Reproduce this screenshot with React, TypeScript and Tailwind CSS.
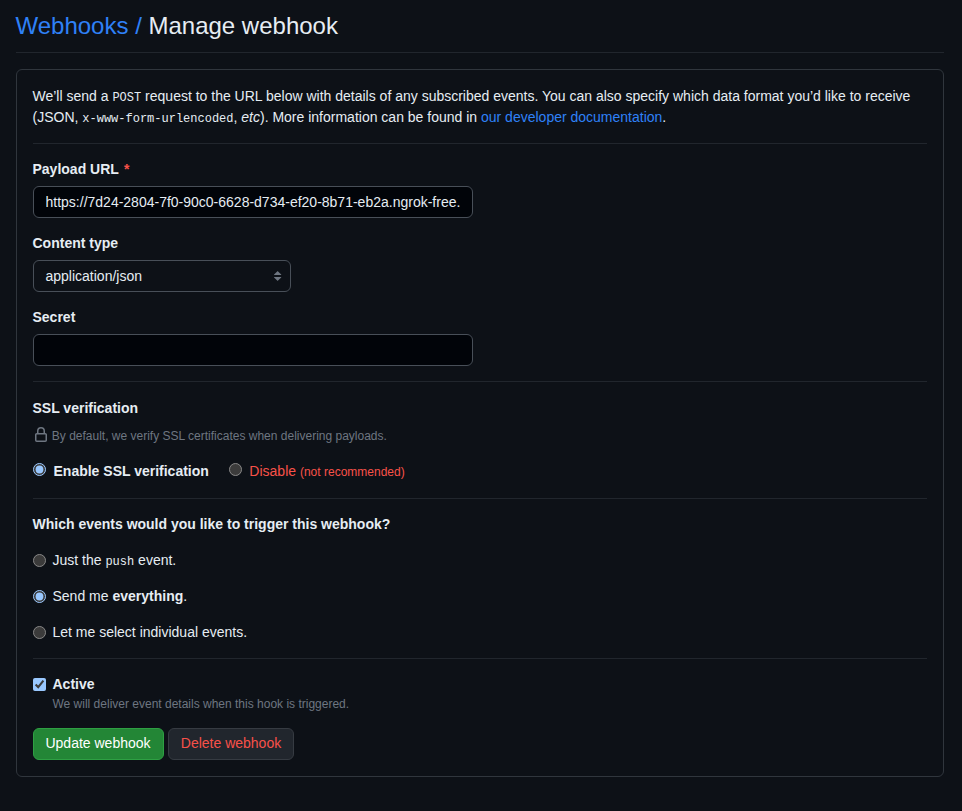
import type { ReactNode } from "react";

function Rule() {
  return <hr className="h-px border-0 bg-[#21262d]" />;
}

function Code({ children }: { children: ReactNode }) {
  return <code className="font-['Liberation_Mono',monospace] text-[12px] leading-none">{children}</code>;
}

function LockIcon() {
  return (
    <svg width="16" height="16" viewBox="0 0 16 16" fill="currentColor" className="mt-px shrink-0" aria-hidden="true">
      <path d="M4 4a4 4 0 0 1 8 0v2h.25c.966 0 1.75.784 1.75 1.75v5.5A1.75 1.75 0 0 1 12.25 15h-8.5A1.75 1.75 0 0 1 2 13.25v-5.5C2 6.784 2.784 6 3.75 6H4Zm8.25 3.5h-8.5a.25.25 0 0 0-.25.25v5.5c0 .138.112.25.25.25h8.5a.25.25 0 0 0 .25-.25v-5.5a.25.25 0 0 0-.25-.25ZM10.5 6V4a2.5 2.5 0 1 0-5 0v2Z" />
    </svg>
  );
}

function EventOption({ checked, children }: { checked?: boolean; children: ReactNode }) {
  return (
    <label className="flex h-[21px]">
      <input type="radio" name="events" defaultChecked={checked} className="mt-1 mr-[7px] size-[13px]" />
      <span>{children}</span>
    </label>
  );
}

export default function App() {
  return (
    <div className="scheme-dark h-[811px] bg-[#0d1117] pt-2 pr-[18.5px] pl-[15.5px] font-['Liberation_Sans',Arial,sans-serif] text-[14px] leading-[21px] text-[#e6edf3]">
      <h1 className="border-b border-[#21262d] pb-2 text-[24px] leading-9">
        <a className="text-[#2f81f7]">Webhooks /</a> Manage webhook
      </h1>

      <form className="mt-4 h-[708px] rounded-md border border-[#30363d] p-4">
        <p className="mb-[15px]">
          We’ll send a <Code>POST</Code> request to the URL below with details of any subscribed events. You can also
          specify which data format you’d like to receive (JSON, <Code>x-www-form-urlencoded</Code>, <em>etc</em>). More
          information can be found in <a className="text-[#2f81f7]">our developer documentation</a>.
        </p>
        <Rule />

        <label className="mt-[15px] mb-1.5 block font-bold">
          Payload URL <span className="ml-[1.5px] text-[#f85149]">*</span>
        </label>
        <input
          type="text"
          defaultValue="https://7d24-2804-7f0-90c0-6628-d734-ef20-8b71-eb2a.ngrok-free."
          className="block h-8 w-[440px] rounded-md border border-[#484f58] bg-[#010409] px-3 leading-5"
        />

        <label className="mt-[15px] mb-1.5 block font-bold">Content type</label>
        <div className="flex h-8 w-[258px] items-center justify-between rounded-md border border-[#484f58] pr-[3.5px] pl-3">
          application/json
          <svg width="16" height="16" viewBox="0 0 16 16" fill="#6e7681" aria-hidden="true">
            <path d="m4.074 9.427 3.396 3.396a.25.25 0 0 0 .354 0l3.396-3.396A.25.25 0 0 0 11.043 9H4.251a.25.25 0 0 0-.177.427ZM4.074 6.573 7.47 3.177a.25.25 0 0 1 .354 0l3.396 3.396a.25.25 0 0 1-.177.427H4.251a.25.25 0 0 1-.177-.427Z" />
          </svg>
        </div>

        <label className="mt-[15px] mb-1.5 block font-bold">Secret</label>
        <input
          type="text"
          className="mb-[15px] block h-8 w-[440px] rounded-md border border-[#484f58] bg-[#010409] px-3"
        />
        <Rule />

        <h2 className="mt-4 font-bold">SSL verification</h2>
        <p className="mt-[7px] flex h-[18px] gap-[3.3px] text-[12px] leading-[18px] text-[#6e7681]">
          <LockIcon />
          <span className="pt-px">By default, we verify SSL certificates when delivering payloads.</span>
        </p>
        <div className="mt-[17px] mb-4 flex h-[21px]">
          <label className="flex font-bold">
            <input type="radio" name="ssl" defaultChecked className="mt-[2px] mr-2 size-[13px]" />
            Enable SSL verification
          </label>
          <label className="ml-5 flex text-[#f85149]">
            <input type="radio" name="ssl" className="mt-[2px] mr-[7.5px] size-[13px]" />
            <span>
              Disable <small className="text-[12px]">(not recommended)</small>
            </span>
          </label>
        </div>
        <Rule />

        <h2 className="mt-[15px] mb-[15px] font-bold">Which events would you like to trigger this webhook?</h2>
        <div className="mb-[15px] flex flex-col gap-[15px]">
          <EventOption>
            Just the <Code>push</Code> event.
          </EventOption>
          <EventOption checked>
            Send me <strong>everything</strong>.
          </EventOption>
          <EventOption>Let me select individual events.</EventOption>
        </div>
        <Rule />

        <label className="mt-[15px] flex items-center font-bold">
          <input type="checkbox" defaultChecked className="mr-[7px] size-[13px]" />
          Active
        </label>
        <p className="mb-[15px] pl-5 text-[12px] leading-[18px] text-[#6e7681]">
          We will deliver event details when this hook is triggered.
        </p>

        <div className="flex gap-1">
          <button
            type="button"
            className="h-8 w-[131px] rounded-md border border-[#2ea043] bg-[#238636] pb-0.5 leading-5 text-white"
          >
            Update webhook
          </button>
          <button
            type="button"
            className="h-8 w-[126px] rounded-md border border-[#363b42] bg-[#21262d] pb-0.5 pl-px leading-5 text-[#f85149]"
          >
            Delete webhook
          </button>
        </div>
      </form>
    </div>
  );
}
